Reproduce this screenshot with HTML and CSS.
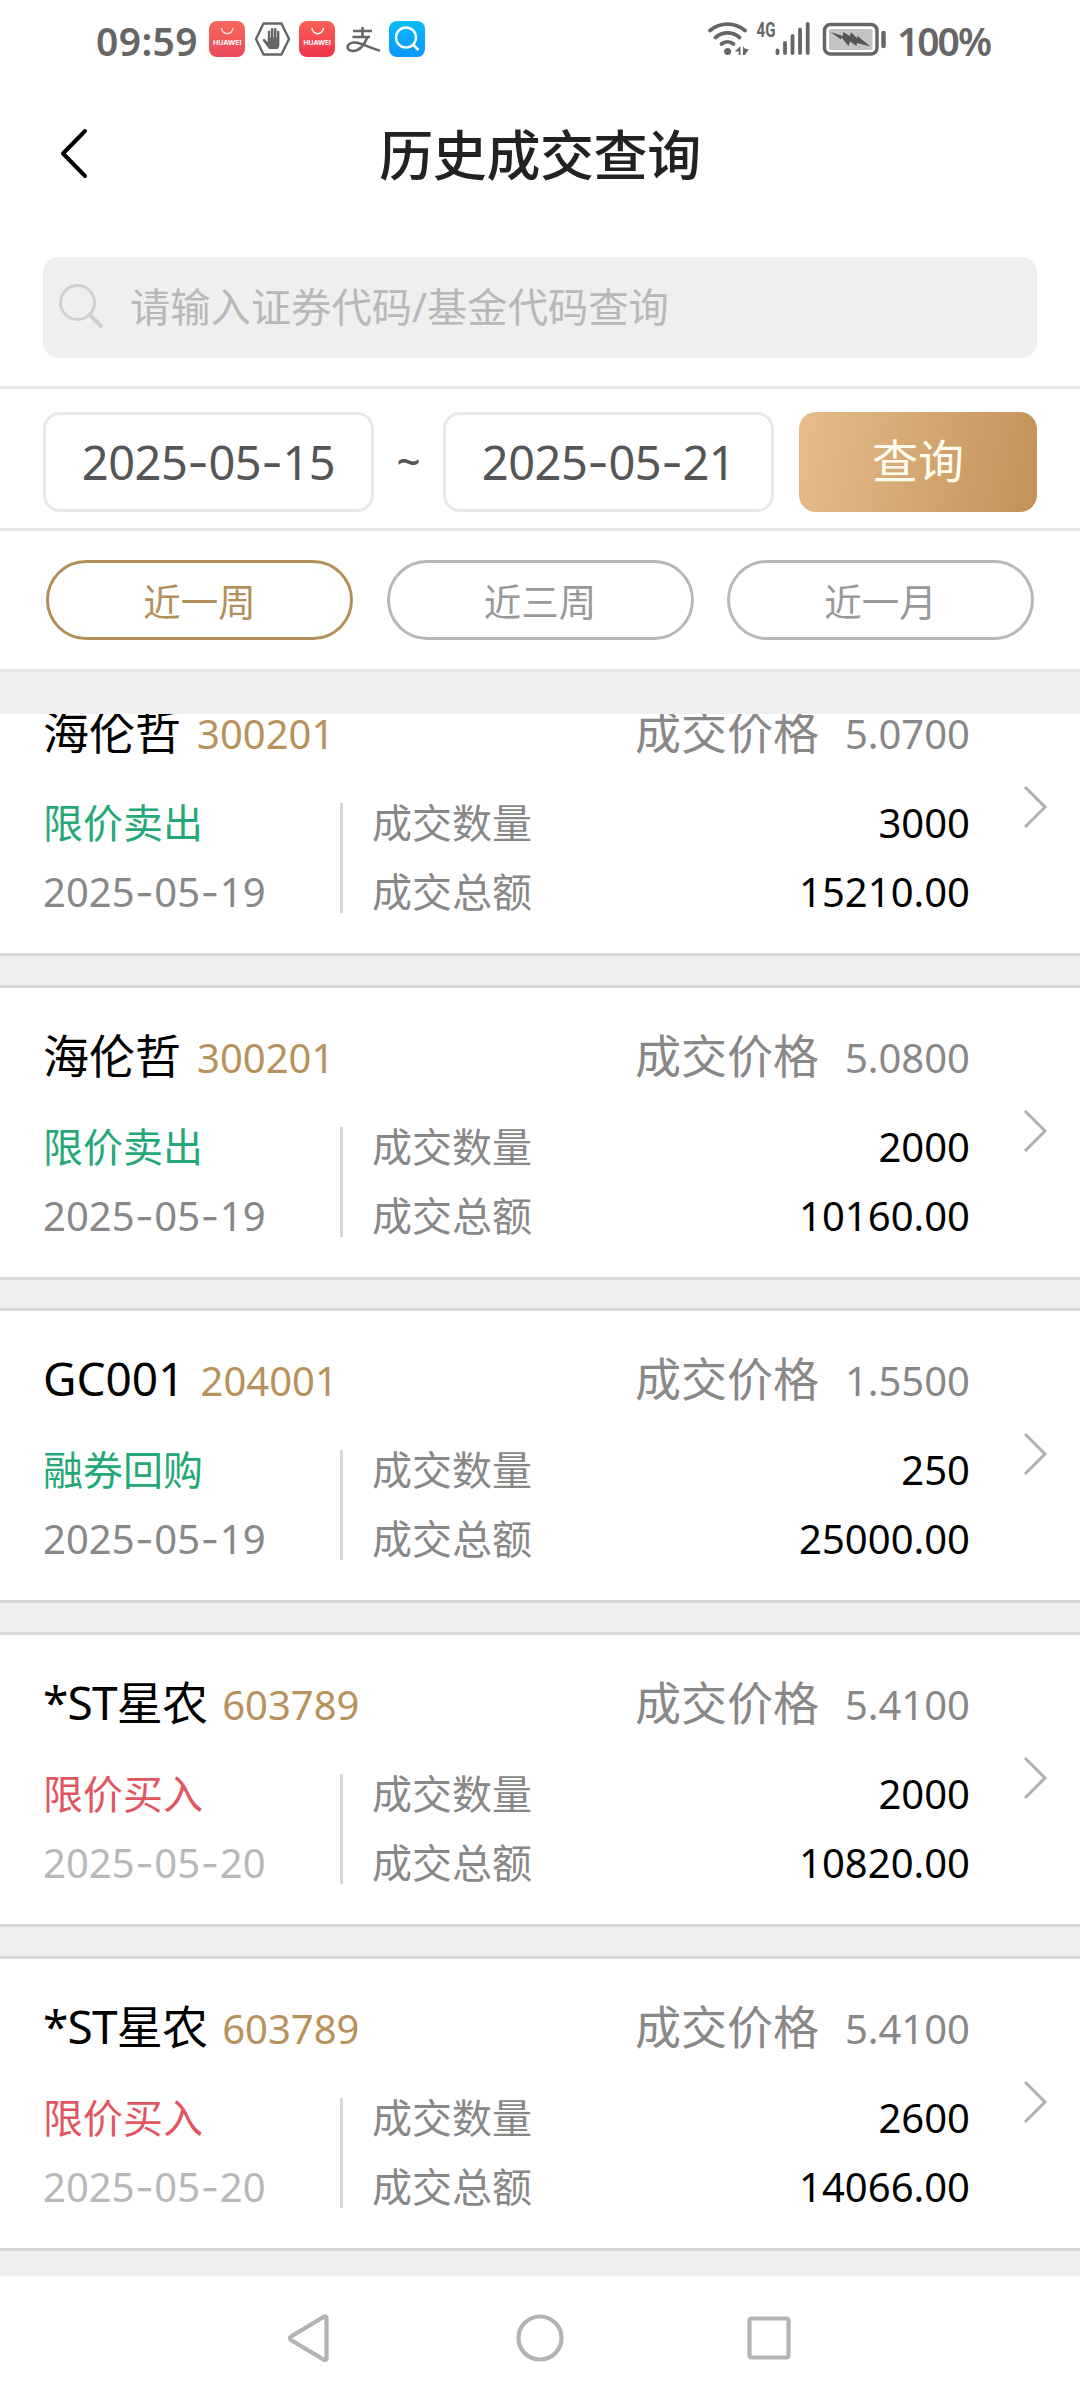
FILE: index.html
```html
<!DOCTYPE html>
<html lang="zh-CN">
<head>
<meta charset="utf-8">
<title>历史成交查询</title>
<link rel="stylesheet" href="styles.css">
</head>
<body>
<div class="screen">
  <div class="statusbar">
    <span class="clock">09:59</span>
    <svg class="notices" width="220" height="40" viewBox="207 19 220 40">
      <defs>
        <linearGradient id="hw" x1="0" y1="0" x2="0" y2="1"><stop offset="0" stop-color="#f8695c"/><stop offset="1" stop-color="#e84a58"/></linearGradient>
        <linearGradient id="hw2" x1="0" y1="0" x2="0" y2="1"><stop offset="0" stop-color="#fa6257"/><stop offset="1" stop-color="#ee344b"/></linearGradient>
        <linearGradient id="qb" x1="0" y1="0" x2="0" y2="1"><stop offset="0" stop-color="#08bdfb"/><stop offset="1" stop-color="#0a96f8"/></linearGradient>
      </defs>
      <rect x="209" y="21" width="36" height="36" rx="8" fill="url(#hw)"/>
      <path d="M221.500 28a5.700 5.700 0 0 0 11.400 0" fill="none" stroke="#fff" stroke-opacity=".85" stroke-width="1.300"/>
      <text class="brand" x="213" y="44.500" textLength="28.500" lengthAdjust="spacingAndGlyphs">HUAWEI</text>
      <path d="M263.500 23.500h18l7.500 15.500-7.500 15.500h-18L256 39z" fill="none" stroke="#666" stroke-width="2.400" stroke-linejoin="round"/>
      <path d="M269.200 49c-2-2-4.700-6.300-6.400-8.200-.8-1.200 1-2.300 2.300-1.300l2.700 2.400V32c0-2 2.400-2 2.400 0v5.500h.6V29.500c0-2 2.600-2 2.600 0v8h.6V29.500c0-2 2.500-2 2.500 0v8h.5V32c0-1.800 2.400-1.800 2.400 0v12.500c0 2-.7 3.200-1.600 4.500z" fill="#666"/>
      <rect x="299" y="21" width="36" height="36" rx="8" fill="url(#hw2)"/>
      <path d="M312 28a5.700 5.700 0 0 0 11.400 0" fill="none" stroke="#fff" stroke-width="1.400"/>
      <text class="brand" x="303.500" y="44.500" textLength="27.500" lengthAdjust="spacingAndGlyphs">HUAWEI</text>
      <path d="M353 31h19M362.500 27v9.500M352.500 37h17.500M367.500 37c-3 7.500-8 14-14.500 14-5 0-6.500-3.500-4.500-6.200 2-2.500 7-3 11.500-1.300 6 2 12 5 20 7.200" fill="none" stroke="#666" stroke-width="2.500"/>
      <rect x="389" y="21" width="36" height="36" rx="8" fill="url(#qb)"/>
      <circle cx="406" cy="37.500" r="10" fill="none" stroke="#fff" stroke-width="2.400"/>
      <path d="M412.500 44l6 6" stroke="#fff" stroke-width="2.600"/>
    </svg>
    <svg class="signals" width="182" height="40" viewBox="706 19 182 40">
      <g fill="none" stroke="#666" stroke-width="3.800" stroke-linecap="round">
        <path d="M710 30.500a27 27 0 0 1 35 0M715.500 37.500a18 18 0 0 1 24 0M721.500 44a9.500 9.500 0 0 1 12 0"/>
        <path d="M777.500 50.500v2.500M785 43v10M792.500 36v17M800 29.500v23.500M807.700 24v29"/>
      </g>
      <circle cx="727.600" cy="51.500" r="3.500" fill="#666"/>
      <path d="M740.500 46v9h-1.800v-3.500h-4zM743 46v9h1.800l4-5.500-4-1z" fill="#666"/>
      <text class="net" x="756.500" y="37" textLength="19" lengthAdjust="spacingAndGlyphs">4G</text>
      <rect x="824.500" y="24.500" width="52.500" height="29.500" rx="6" fill="none" stroke="#666" stroke-width="3.500"/>
      <rect x="829" y="29" width="43.500" height="21" rx="2" fill="#c3c3c3"/>
      <path d="M830.500 32l12.500 4v-4l7 4 1-4 6 6.200.5-2.200L870.500 46.500 857 43l-.5 3-6.500-4.500-1.500 4.500-7-8.500-.5 2z" fill="#555"/>
      <path d="M883.500 33v13" stroke="#666" stroke-width="4.500" stroke-linecap="round"/>
    </svg>
    <span class="charge">100%</span>
  </div>

  <header class="titlebar">
    <svg class="back" width="30" height="52" viewBox="0 0 30 52"><path d="M27 4L5 26.500 27 49" fill="none" stroke="#000" stroke-width="4" stroke-linecap="round" stroke-linejoin="round"/></svg>
    <h1>历史成交查询</h1>
  </header>

  <div class="search">
    <svg width="46" height="46" viewBox="0 0 46 46" fill="none" stroke="#d0d0d0" stroke-width="3"><circle cx="19.500" cy="18.500" r="17"/><path d="M32 31l12 12" stroke-width="4"/></svg>
    <span>请输入证券代码/基金代码查询</span>
  </div>

  <div class="range">
    <div class="date">2025<i>-</i>05<i>-</i>15</div>
    <span class="tilde">~</span>
    <div class="date">2025<i>-</i>05<i>-</i>21</div>
    <div class="submit">查询</div>
  </div>

  <div class="presets">
    <div class="pill active">近一周</div>
    <div class="pill">近三周</div>
    <div class="pill">近一月</div>
  </div>

  <main class="viewport">
    <div class="list">
      <article class="card">
        <div class="info">
          <div class="head"><span class="name">海伦哲</span><span class="code">300201</span><span class="label">成交价格</span><span class="price">5.0700</span></div>
          <div class="detail">
            <div class="side"><div class="sell">限价卖出</div><div class="day">2025<i>-</i>05<i>-</i>19</div></div>
            <div class="figures"><div><span>成交数量</span><b>3000</b></div><div><span>成交总额</span><b>15210.00</b></div></div>
          </div>
        </div>
        <svg class="more" width="26" height="44" viewBox="0 0 26 44"><path d="M2 2l20 20L2 42"/></svg>
      </article>
      <article class="card">
        <div class="info">
          <div class="head"><span class="name">海伦哲</span><span class="code">300201</span><span class="label">成交价格</span><span class="price">5.0800</span></div>
          <div class="detail">
            <div class="side"><div class="sell">限价卖出</div><div class="day">2025<i>-</i>05<i>-</i>19</div></div>
            <div class="figures"><div><span>成交数量</span><b>2000</b></div><div><span>成交总额</span><b>10160.00</b></div></div>
          </div>
        </div>
        <svg class="more" width="26" height="44" viewBox="0 0 26 44"><path d="M2 2l20 20L2 42"/></svg>
      </article>
      <article class="card">
        <div class="info">
          <div class="head"><span class="name">GC001</span><span class="code">204001</span><span class="label">成交价格</span><span class="price">1.5500</span></div>
          <div class="detail">
            <div class="side"><div class="sell">融券回购</div><div class="day">2025<i>-</i>05<i>-</i>19</div></div>
            <div class="figures"><div><span>成交数量</span><b>250</b></div><div><span>成交总额</span><b>25000.00</b></div></div>
          </div>
        </div>
        <svg class="more" width="26" height="44" viewBox="0 0 26 44"><path d="M2 2l20 20L2 42"/></svg>
      </article>
      <article class="card">
        <div class="info">
          <div class="head"><span class="name mixed">*ST星农</span><span class="code">603789</span><span class="label">成交价格</span><span class="price">5.4100</span></div>
          <div class="detail">
            <div class="side"><div class="buy">限价买入</div><div class="day today">2025<i>-</i>05<i>-</i>20</div></div>
            <div class="figures"><div><span>成交数量</span><b>2000</b></div><div><span>成交总额</span><b>10820.00</b></div></div>
          </div>
        </div>
        <svg class="more" width="26" height="44" viewBox="0 0 26 44"><path d="M2 2l20 20L2 42"/></svg>
      </article>
      <article class="card">
        <div class="info">
          <div class="head"><span class="name mixed">*ST星农</span><span class="code">603789</span><span class="label">成交价格</span><span class="price">5.4100</span></div>
          <div class="detail">
            <div class="side"><div class="buy">限价买入</div><div class="day today">2025<i>-</i>05<i>-</i>20</div></div>
            <div class="figures"><div><span>成交数量</span><b>2600</b></div><div><span>成交总额</span><b>14066.00</b></div></div>
          </div>
        </div>
        <svg class="more" width="26" height="44" viewBox="0 0 26 44"><path d="M2 2l20 20L2 42"/></svg>
      </article>
    </div>
  </main>

  <nav class="navbar">
    <svg width="50" height="50" viewBox="0 0 50 50"><path d="M40.500 4.500v41.500a1.500 1.500 0 0 1-2 1L5 27q-2-1.800 0-3.500L38.500 3.500a1.500 1.500 0 0 1 2 1z"/></svg>
    <svg width="50" height="50" viewBox="0 0 50 50"><circle cx="25" cy="25" r="21.500"/></svg>
    <svg width="50" height="50" viewBox="0 0 50 50"><rect x="5.500" y="5.500" width="39" height="39" rx="2"/></svg>
  </nav>
</div>
</body>
</html>
```
FILE: styles.css
```css
* { box-sizing: border-box; }
body {
  margin: 0;
  background: #fff;
  font-family: "Noto Sans", "Noto Sans CJK SC", sans-serif;
  color: #000;
}
svg { display: block; flex: none; }
i { font-family: Inter, sans-serif; font-style: normal; }
.screen {
  width: 1080px;
  height: 2400px;
  display: flex;
  flex-direction: column;
  overflow: hidden;
}

.statusbar {
  height: 80px;
  padding: 0 91px 0 96px;
  display: flex;
  align-items: flex-start;
  color: #666;
  font-size: 39px;
  font-weight: 600;
  line-height: 81px;
}
.clock { width: 111px; letter-spacing: 0.4px; }
.notices, .signals { margin-top: 19px; }
.signals { margin-left: auto; }
.charge { width: 101px; padding-left: 9px; letter-spacing: -2px; }
.brand { font: 700 6px Inter, sans-serif; fill: #fff; }
.net { font: 700 20px Roboto, sans-serif; fill: #666; }

.titlebar {
  height: 177px;
  padding: 47px 58px 0;
  display: grid;
  grid-template-columns: 30px 1fr 30px;
  align-items: start;
}
h1 {
  margin: -10px 0 0;
  text-align: center;
  font-size: 54px;
  font-weight: 500;
  line-height: 76px;
  color: #222;
  letter-spacing: -0.4px;
}

.search {
  height: 101px;
  margin: 0 43px 28px;
  padding: 0 0 2px 15px;
  display: flex;
  align-items: center;
  gap: 26px;
  border-radius: 16px;
  background: #efefef;
  color: #b8b8b8;
  font-size: 40.300px;
  line-height: 60px;
}

.range {
  height: 145px;
  padding: 23px 43px 0;
  display: flex;
  border-top: 3px solid #e8e8e8;
  border-bottom: 3px solid #e8e8e8;
}
.date {
  width: 331px;
  height: 100px;
  border: 3px solid #e8e8e8;
  border-radius: 17px;
  text-align: center;
  color: #555;
  font-size: 47px;
  line-height: 95px;
  letter-spacing: -0.5px;
}
.tilde {
  width: 69px;
  text-align: center;
  color: #555;
  font-size: 42px;
  font-weight: 500;
  line-height: 98px;
}
.submit {
  width: 238px;
  height: 100px;
  margin-left: 25px;
  border-radius: 17px;
  background: linear-gradient(100deg, #e6bd8c, #c29257);
  text-align: center;
  color: #fffdf0;
  font-size: 46px;
  line-height: 97px;
}

.presets {
  height: 141px;
  padding: 29px 46px 0;
  display: flex;
  justify-content: space-between;
  border-bottom: 3px solid #e8e8e8;
}
.pill {
  width: 307px;
  height: 80px;
  border: 3px solid #b8b8b8;
  border-radius: 40px;
  text-align: center;
  color: #999;
  font-size: 37.500px;
  line-height: 77px;
}
.pill.active { border-color: #b38f5b; color: #b38f5b; }

.viewport {
  height: 1604px;
  border-top: 42px solid #efefef;
  background: #efefef;
  overflow: hidden;
}
.list {
  margin-top: -53px;
  display: flex;
  flex-direction: column;
  gap: 28.700px;
}
.card {
  height: 295px;
  flex: none;
  display: flex;
  border-top: 3px solid #d8d8d8;
  border-bottom: 3px solid #d8d8d8;
  background: #fff;
}
.info { width: 927px; margin-left: 43px; padding-top: 37px; font-size: 40px; }
.head {
  display: flex;
  align-items: baseline;
  height: 87px;
  line-height: 60px;
  color: #888;
}
.name { font-size: 46px; color: #000; }
.mixed { margin-right: -1px; letter-spacing: -0.8px; }
.code { margin-left: 16px; color: #b8915c; }
.label { margin-left: auto; font-size: 46px; }
.price { width: 151px; text-align: right; }
.detail { display: flex; line-height: 69px; }
.side { width: 297px; color: #888; }
.sell { color: #25a877; }
.buy { color: #e25560; }
.day i { padding: 0 0.700px; }
.today { color: #b8b8b8; }
.figures {
  flex: 1;
  height: 110px;
  margin-top: 15px;
  padding-left: 29px;
  border-left: 3px solid #d8d8d8;
  color: #888;
}
.figures div {
  display: flex;
  justify-content: space-between;
  position: relative;
  top: -15px;
}
.figures b { font-weight: 400; color: #000; }
.more {
  margin: 121px 0 0 53px;
  fill: none;
  stroke: #b0b0b0;
  stroke-width: 3;
}

.navbar {
  height: 124px;
  padding: 0 286px;
  display: flex;
  justify-content: space-between;
  align-items: center;
  fill: none;
  stroke: #b3b3b3;
  stroke-width: 4.200;
}
```
